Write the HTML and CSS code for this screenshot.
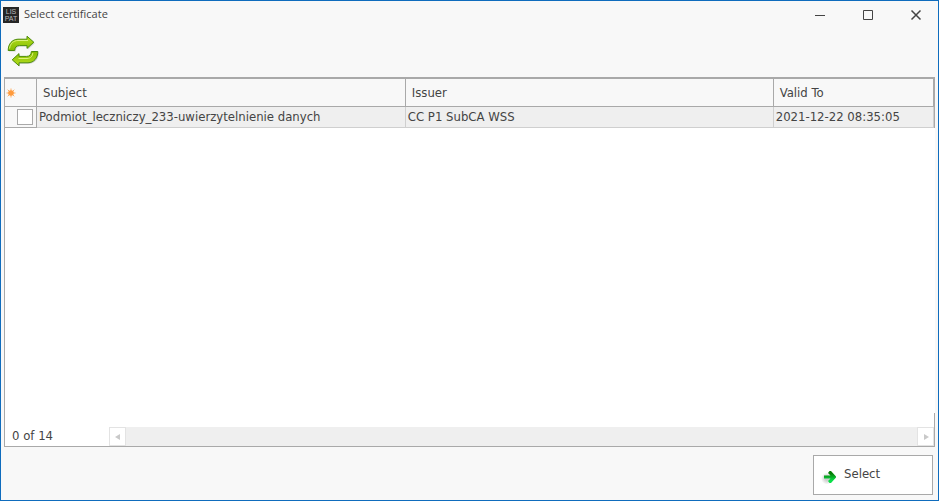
FILE: index.html
```html
<!DOCTYPE html>
<html lang="en">
<head>
<meta charset="utf-8">
<title>Select certificate</title>
<link rel="stylesheet" href="styles.css">
</head>
<body>
<main class="window">
  <header class="titlebar">
    <span class="app-icon"><span>LIS</span><span>PAT</span></span>
    <h1 class="title">Select certificate</h1>
    <div class="window-controls">
      <button type="button" aria-label="Minimize"><svg width="12" height="12" viewBox="0 0 12 12"><path d="M1 6.500h10"/></svg></button>
      <button type="button" aria-label="Maximize"><svg width="12" height="12" viewBox="0 0 12 12"><path d="M1.500 1.500h9v9h-9z"/></svg></button>
      <button type="button" aria-label="Close"><svg width="12" height="12" viewBox="0 0 12 12"><path class="cross" d="M1.500 1.500l9 9M10.500 1.500l-9 9"/></svg></button>
    </div>
  </header>
  <div class="toolbar">
    <button type="button" class="refresh" aria-label="Refresh">
      <svg width="32" height="32" viewBox="0 0 32 32">
        <defs>
          <linearGradient id="lime" x1="0" y1="0" x2="0" y2="1">
            <stop offset="0" stop-color="#b5de20"/>
            <stop offset="1" stop-color="#86bc00"/>
          </linearGradient>
          <path id="arrow" d="M1.200 15.500C1.200 9 5 4.400 11 4.200H20V1.200L26.800 7.200L20 13.400V10.600H12.500C9.500 10.600 8 12 7.600 15.500Z"/>
        </defs>
        <g class="shadow"><use href="#arrow" x="1" y="1"/><use href="#arrow" transform="rotate(180 16.500 16.500)"/></g>
        <use class="arrow" href="#arrow"/>
        <use class="arrow" href="#arrow" transform="rotate(180 16 16)"/>
        <path class="shine" d="M2.600 13.500C3.200 8.500 6.500 5.600 11 5.500H21M11.500 23.500H20C24 23.300 25.500 21 25.800 18"/>
      </svg>
    </button>
  </div>
  <section class="grid">
    <table>
      <colgroup><col class="col-mark"><col class="col-subject"><col class="col-issuer"><col></colgroup>
      <thead>
        <tr>
          <th class="mark"><svg width="10" height="10" viewBox="0 0 10 10"><path class="star" d="M5 .5v9M.5 5h9M1.700 1.700l6.600 6.600M8.300 1.700l-6.600 6.600"/><circle cx="5" cy="5" r="2.800" fill="#ff9a3c"/></svg></th>
          <th>Subject</th>
          <th>Issuer</th>
          <th>Valid To</th>
        </tr>
      </thead>
      <tbody>
        <tr>
          <td class="check"><input type="checkbox" aria-label="Select certificate row"></td>
          <td>Podmiot_leczniczy_233-uwierzytelnienie danych</td>
          <td>CC P1 SubCA WSS</td>
          <td>2021-12-22 08:35:05</td>
        </tr>
      </tbody>
    </table>
    <footer class="grid-footer">
      <span class="count">0 of 14</span>
      <div class="scrollbar">
        <button type="button" aria-label="Scroll left"><svg width="6" height="6" viewBox="0 0 6 6"><path d="M5 0v6L0 3z"/></svg></button>
        <button type="button" aria-label="Scroll right"><svg width="6" height="6" viewBox="0 0 6 6"><path d="M1 0v6l5-3z"/></svg></button>
      </div>
    </footer>
  </section>
  <div class="actions">
    <button type="button" class="select">
      <svg width="16" height="16" viewBox="0 0 16 16">
        <defs>
          <linearGradient id="green" x1="0" y1="0" x2="0" y2="1">
            <stop offset="0.200" stop-color="#057d05"/>
            <stop offset="0.800" stop-color="#0be04a"/>
          </linearGradient>
          <radialGradient id="haze"><stop offset="0.300" stop-color="#ccc"/><stop offset="1" stop-color="#ccc" stop-opacity="0"/></radialGradient>
        </defs>
        <ellipse cx="6" cy="9.500" rx="6" ry="6" fill="url(#haze)"/>
        <path fill="url(#green)" d="M3 6.500H9.500L7 4L8.500 2H10L15 7.500V8.500L10 14H8.500L7 12L9.500 9.500H3Z"/>
      </svg>
      <span>Select</span>
    </button>
  </div>
</main>
</body>
</html>
```
FILE: styles.css
```css
* {
  box-sizing: border-box;
}

body {
  margin: 0;
  font: 13px/16px "DejaVu Sans Condensed", "DejaVu Sans", sans-serif;
  color: #444;
}

button {
  padding: 0;
  border: 0;
  background: none;
  font: inherit;
  color: inherit;
}

svg {
  display: block;
}

.window {
  display: flex;
  flex-direction: column;
  min-height: 100vh;
  padding: 0 3px;
  border: 1px solid #0f6cbd;
  background: #f8f8f8;
}

.titlebar {
  display: flex;
  align-items: center;
  gap: 5px;
  height: 28px;
  margin: 0 -1px;
}

.app-icon {
  display: flex;
  flex-direction: column;
  justify-content: center;
  width: 16px;
  height: 16px;
  background: #262626;
  color: #bbb;
  font: 7px/7px "Liberation Sans", sans-serif;
  text-align: center;
}

.title {
  flex: 1;
  margin: 0;
  padding-bottom: 2px;
  font: 11px/16px "Open Sans", sans-serif;
}

.window-controls {
  display: flex;
  margin-right: -4px;
}

.window-controls button {
  display: grid;
  place-items: center;
  width: 48px;
  height: 28px;
}

.window-controls path {
  fill: none;
  stroke: #444;
}

.window-controls .cross {
  stroke-width: 1.500;
}

.toolbar {
  height: 48px;
  padding: 6px 3px;
}

.shadow {
  fill: #000;
  opacity: 0.150;
}

.arrow {
  fill: url(#lime);
  stroke: #4d8c0a;
  stroke-linejoin: round;
}

.shine {
  fill: none;
  stroke: #dcf27c;
}

.grid {
  display: flex;
  flex: 1;
  flex-direction: column;
  border: solid #a9a9a9;
  border-width: 2px 0 1px 1px;
  background: #fff;
}

table {
  width: 100%;
  table-layout: fixed;
  border-collapse: separate;
  border-spacing: 0;
  border-right: 1px solid #a9a9a9;
}

.col-mark {
  width: 32px;
}

.col-subject {
  width: 39.700%;
}

.col-issuer {
  width: 39.600%;
}

th {
  height: 28px;
  padding: 0 6px;
  border: solid #a9a9a9;
  border-width: 0 1px 1px 0;
  background: #f8f8f8;
  font-weight: normal;
  text-align: left;
}

th.mark {
  padding: 0 1px;
}

.star {
  stroke: #ffb066;
}

td {
  height: 21px;
  padding: 0 2px;
  border: solid #cfcfcf;
  border-width: 0 1px 1px 0;
  background: #efefef;
}

td.check {
  padding: 0 3px;
  border-color: #a9a9a9;
  background: #f8f8f8;
}

.check input {
  display: block;
  width: 16px;
  height: 16px;
  margin: 0 0 0 auto;
  appearance: none;
  border: 1px solid #a9a9a9;
  background: #fff;
}

.grid-footer {
  display: flex;
  align-items: flex-end;
  height: 33px;
  margin-top: auto;
  border-right: 1px solid #a9a9a9;
}

.count {
  width: 104px;
  padding: 0 7px 2px;
}

.scrollbar {
  display: flex;
  flex: 1;
  justify-content: space-between;
  height: 19px;
  background: #efefef;
}

.scrollbar button {
  display: grid;
  place-items: center;
  width: 17px;
  border: 1px solid #e3e3e3;
  background: #fff;
}

.scrollbar path {
  fill: #c9c9c9;
}

.actions {
  display: flex;
  justify-content: flex-end;
  padding: 8px 2px 5px;
}

.select {
  display: flex;
  align-items: center;
  gap: 7px;
  width: 120px;
  height: 40px;
  padding: 0 7px;
  border: 1px solid #a9a9a9;
  background: #fff;
}

.select span {
  padding-bottom: 3px;
}

.select svg {
  margin-top: 3px;
}
```
